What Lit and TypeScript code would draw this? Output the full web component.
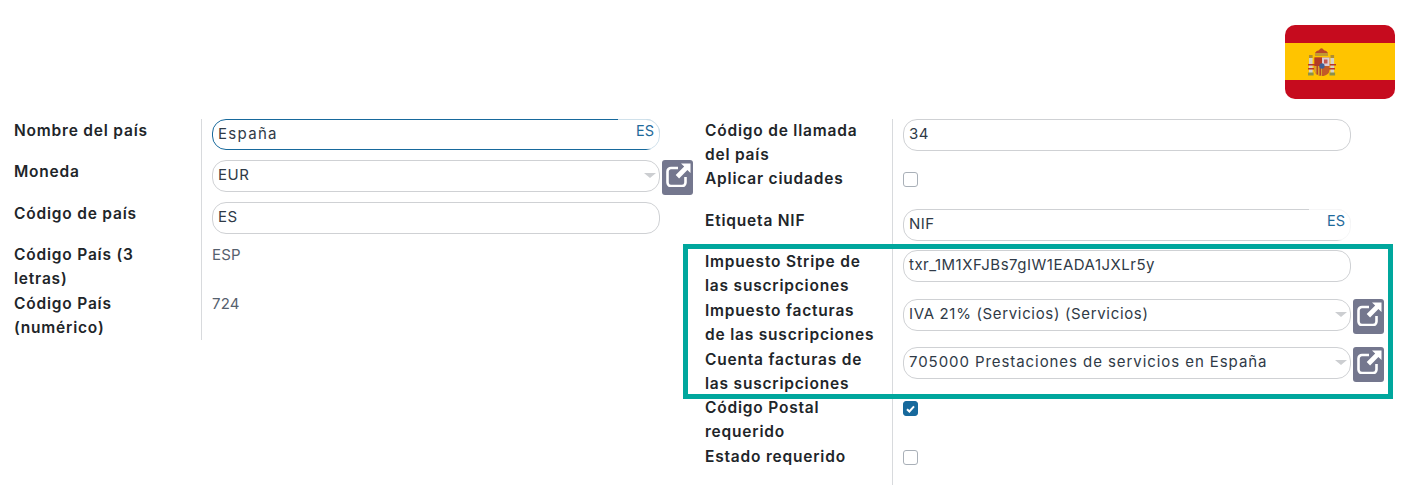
import { LitElement, css, html, nothing } from "lit";
import { customElement } from "lit/decorators.js";

const linkIcon = html`<svg class="link-icon" viewBox="0 0 26 24" aria-hidden="true">
  <path d="M13 5H6a3.5 3.5 0 0 0-3.5 3.5v11A3.5 3.5 0 0 0 6 23h11a3.5 3.5 0 0 0 3.5-3.500V14" fill="none" stroke="#fff" stroke-width="2.6"/>
  <path d="M16 .5h9.500V10l-3.100-3.100-8.300 8.500-3.400-3.400 8.500-8.400z" fill="#fff"/>
</svg>`;

@customElement("app-root")
export class AppRoot extends LitElement {
  static styles = css`
    :host {
      display: block;
      width: 1406px;
      height: 493px;
      position: relative;
      background: #fff;
      overflow: hidden;
      font-family: Inter, "Liberation Sans", sans-serif;
      color: #212529;
    }
    .top {
      display: flex;
      justify-content: flex-end;
      height: 119px;
      padding: 25px 11px 0 0;
      box-sizing: border-box;
    }
    .flag {
      width: 110px;
      height: 74px;
      border-radius: 10px;
      display: block;
    }
    .sheet {
      display: grid;
      grid-template-columns: 691px 1fr;
      align-items: start;
      padding-left: 14px;
    }
    .group {
      display: grid;
      grid-template-columns: 187px 1fr;
    }
    .label {
      font-size: 15.5px;
      font-weight: 600;
      line-height: 24.5px;
      letter-spacing: 0.8px;
      color: #212529;
      margin-top: -0.5px;
      padding-right: 17px;
    }
    .label.up { margin-top: -1.5px; }
    .label.down { margin-top: 0.5px; height: 49px; }
    .value {
      border-left: 1px solid #d8dadd;
      padding-left: 10px;
      display: flex;
      align-items: flex-start;
      gap: 2px;
      font-size: 15px;
      color: #3d4754;
    }
    .r41 { height: 41px; }
    .r42 { height: 42px; }
    .r48 { height: 48px; }
    .r49 { height: 49px; }
    .r50 { height: 50px; }
    .r39 { height: 39px; }
    .label.r48 { height: 47px; }
    .field {
      position: relative;
      width: 448px;
      height: 32px;
      box-sizing: border-box;
      border: 1px solid #cfd1d4;
      border-radius: 14px;
      padding: 0 5px;
      line-height: 28px;
      font-size: 15px;
      letter-spacing: 0.5px;
      color: #2f3a47;
      white-space: nowrap;
    }
    .field.active {
      height: 31px;
      border-color: #17699c;
      letter-spacing: 1.3px;
    }
    .field.mid { letter-spacing: 0.66px; }
    .field.wide { letter-spacing: 0.93px; }
    .lang {
      position: absolute;
      top: -1px;
      right: -1px;
      bottom: 0;
      width: 42px;
      padding-right: 6px;
      box-sizing: border-box;
      text-align: right;
      line-height: 23px;
      font-size: 14.5px;
      letter-spacing: 0;
      color: #1f6a9b;
      background: rgba(255, 255, 255, 0.8);
      border-radius: 0 14px 0 0;
    }
    .caret {
      position: absolute;
      right: 3px;
      top: 12px;
      width: 0;
      height: 0;
      border-left: 6px solid transparent;
      border-right: 6px solid transparent;
      border-top: 5px solid #ccced1;
    }
    .link {
      width: 31px;
      height: 35px;
      border-radius: 3px;
      background: #74778e;
      display: flex;
      align-items: flex-start;
      justify-content: center;
      padding-top: 3px;
      box-sizing: border-box;
    }
    .link-icon {
      width: 26px;
      height: 24px;
      display: block;
    }
    .plain {
      line-height: 24.5px;
      letter-spacing: 0.2px;
      color: #56616e;
      margin-top: -0.5px;
    }
    .check {
      width: 15px;
      height: 15px;
      box-sizing: border-box;
      border: 1px solid #a9b0b8;
      border-radius: 3px;
      margin-top: 4px;
      background: #fff;
    }
    .check.on {
      border-color: #17699c;
      background: #17699c;
      display: flex;
      align-items: center;
      justify-content: center;
    }
    .check svg {
      width: 9px;
      height: 8px;
      display: block;
    }
    .mark {
      position: absolute;
      left: 683px;
      top: 244px;
      width: 710px;
      height: 155px;
      box-sizing: border-box;
      border: 5px solid #00a79d;
      pointer-events: none;
    }
  `;

  private row(name: string, h: string, content: unknown, nudge = "") {
    return html`<div class="label ${h} ${nudge}">${name}</div>
      <div class="value ${h}">${content}</div>`;
  }

  private field(text: string, lang?: string, kind = "") {
    return html`<div class="field ${kind}">
      ${text}${lang ? html`<span class="lang">${lang}</span>` : nothing}
    </div>`;
  }

  private select(text: string, kind = "") {
    return html`<div class="field ${kind}">${text}<span class="caret"></span></div>
      <div class="link">${linkIcon}</div>`;
  }

  private check(on = false) {
    return html`<div class="check ${on ? "on" : ""}">
      ${on
        ? html`<svg viewBox="0 0 9 8"><path d="M1 4.200 3.400 6.500 8 1.400" fill="none" stroke="#fff" stroke-width="2"/></svg>`
        : nothing}
    </div>`;
  }

  private flag() {
    return html`<svg class="flag" viewBox="0 0 110 74" role="img" aria-label="España">
      <rect width="110" height="74" fill="#c60b1e"/>
      <rect y="18" width="110" height="37" fill="#ffc400"/>
      <!-- columns -->
      <rect x="24" y="33" width="3.600" height="15" fill="#d4d2c6"/>
      <rect x="45.500" y="33" width="3.600" height="15" fill="#d4d2c6"/>
      <rect x="23" y="47.500" width="5.600" height="3" fill="#8e9148"/>
      <rect x="44.500" y="47.500" width="5.600" height="3" fill="#8e9148"/>
      <rect x="24" y="30" width="3.600" height="3" fill="#b08d2e"/>
      <rect x="45.500" y="30" width="3.600" height="3" fill="#b08d2e"/>
      <path d="M23 39h7v1.600h-7zM23 43h6v1.400h-6zM44 39h7v1.600h-7zM44 43h6v1.400h-6z" fill="#b8352a"/>
      <!-- crown -->
      <path d="M30 30c-.5-3 2-4.500 4-4.800.8-1.200 1.600-2 2.500-2s1.700.8 2.500 2c2 .3 4.500 1.800 4 4.800z" fill="#b9472a"/>
      <path d="M30 28h13v3H30z" fill="#c29a30"/>
      <!-- shield -->
      <path d="M29.500 32.500h15V45c0 3.500-3.500 6-7.500 6s-7.500-2.500-7.500-6z" fill="#c25a27"/>
      <rect x="29.500" y="32.500" width="7.500" height="8.500" fill="#b33b24"/>
      <rect x="37" y="32.500" width="7.500" height="8.500" fill="#dccfd4"/>
      <rect x="39" y="34.500" width="3.500" height="4" fill="#c2584f"/>
      <path d="M29.500 41H37v10c-4 0-7.500-2.500-7.500-6z" fill="#d9a229"/>
      <path d="M31.500 41h1.500v8.500h-1.500zM34.500 41H36v9.500h-1.500z" fill="#b5452a"/>
      <ellipse cx="37" cy="41" rx="2.600" ry="2.800" fill="#3f5f95"/>
    </svg>`;
  }

  render() {
    return html`
      <div class="top">${this.flag()}</div>
      <div class="sheet">
        <div class="group">
          ${this.row("Nombre del país", "r41", this.field("España", "ES", "active"))}
          ${this.row("Moneda", "r42", this.select("EUR"))}
          ${this.row("Código de país", "r41", this.field("ES"))}
          ${this.row("Código País (3 letras)", "r49", html`<div class="plain">ESP</div>`)}
          ${this.row("Código País (numérico)", "r48", html`<div class="plain">724</div>`)}
        </div>
        <div class="group">
          ${this.row("Código de llamada del país", "r49", this.field("34"))}
          ${this.row("Aplicar ciudades", "r41", this.check(), "up")}
          ${this.row("Etiqueta NIF", "r41", this.field("NIF", "ES"))}
          ${this.row("Impuesto Stripe de las suscripciones", "r49", this.field("txr_1M1XFJBs7gIW1EADA1JXLr5y"))}
          ${this.row("Impuesto facturas de las suscripciones", "r48", this.select("IVA 21% (Servicios) (Servicios)", "mid"))}
          ${this.row("Cuenta facturas de las suscripciones", "r50", this.select("705000 Prestaciones de servicios en España", "wide"), "down")}
          ${this.row("Código Postal requerido", "r49", this.check(true), "up")}
          ${this.row("Estado requerido", "r39", this.check(), "up")}
        </div>
      </div>
      <div class="mark"></div>
    `;
  }
}
